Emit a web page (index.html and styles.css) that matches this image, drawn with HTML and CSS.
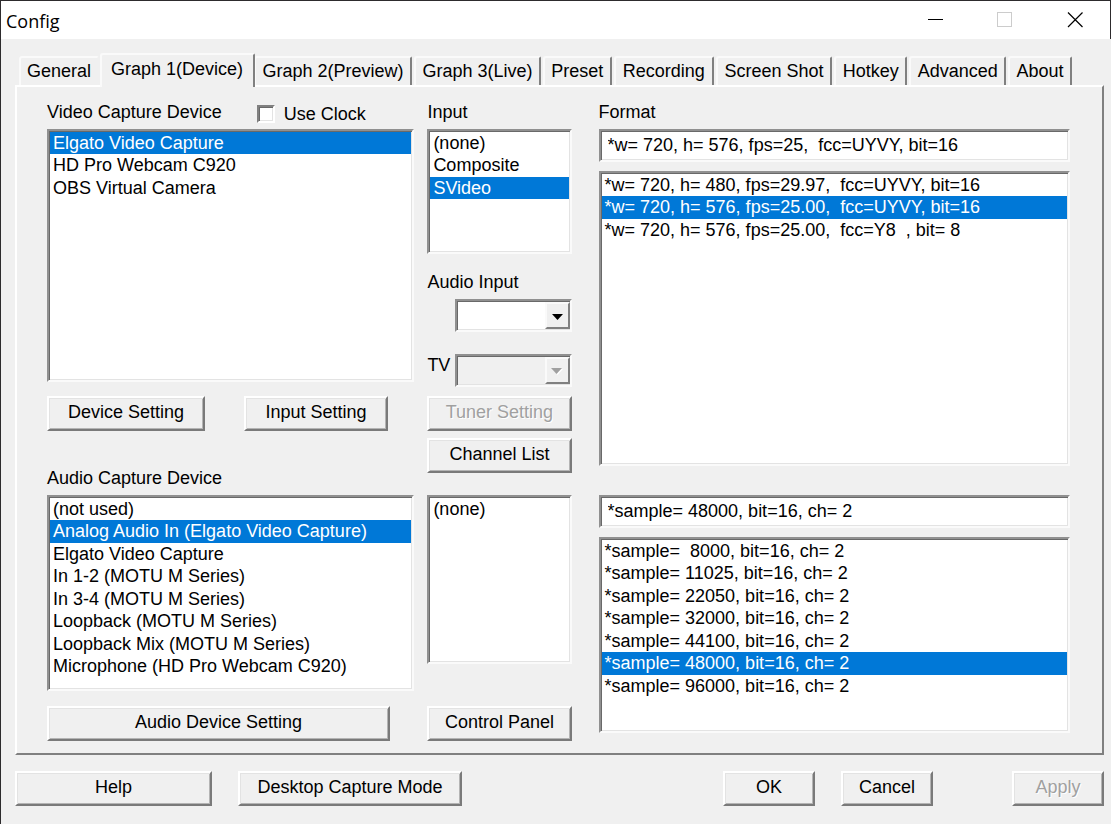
FILE: index.html
```html
<!DOCTYPE html>
<html lang="en">
<head>
<meta charset="utf-8">
<title>Config</title>
<link rel="stylesheet" href="styles.css">
</head>
<body>
<div class="window">
  <header class="titlebar">
    <h1 class="title">Config</h1>
    <div class="window-controls">
      <button class="window-button" type="button" aria-label="Minimize">
        <svg width="16" height="16" viewBox="0 0 16 16" shape-rendering="crispEdges"><path d="M1 7.500H16" stroke="#000"/></svg>
      </button>
      <button class="window-button" type="button" aria-label="Maximize" disabled>
        <svg width="16" height="16" viewBox="0 0 16 16" shape-rendering="crispEdges"><rect x="0.5" y="0.5" width="14" height="14" fill="none" stroke="#ccc"/></svg>
      </button>
      <button class="window-button" type="button" aria-label="Close">
        <svg width="16" height="16" viewBox="0 0 16 16"><path d="M1 0.500L15.500 15M15.500 0.500L1 15" stroke="#000" stroke-width="1.200"/></svg>
      </button>
    </div>
  </header>

  <main class="content">
    <div class="tabs" role="tablist">
      <button class="tab tab-first" type="button" role="tab">General</button>
      <button class="tab tab-active" type="button" role="tab" aria-selected="true">Graph 1(Device)</button>
      <button class="tab" type="button" role="tab">Graph 2(Preview)</button>
      <button class="tab" type="button" role="tab">Graph 3(Live)</button>
      <button class="tab" type="button" role="tab">Preset</button>
      <button class="tab tab-wide" type="button" role="tab">Recording</button>
      <button class="tab tab-wide" type="button" role="tab">Screen Shot</button>
      <button class="tab" type="button" role="tab">Hotkey</button>
      <button class="tab" type="button" role="tab">Advanced</button>
      <button class="tab" type="button" role="tab">About</button>
    </div>

    <section class="panel" role="tabpanel">
      <div class="column column-devices">
        <div class="label-row">
          <label class="label" for="video-device">Video Capture Device</label>
          <label class="check"><input class="checkbox" type="checkbox">Use Clock</label>
        </div>
        <select class="listbox video-devices" id="video-device" size="3">
          <option selected>Elgato Video Capture</option>
          <option>HD Pro Webcam C920</option>
          <option>OBS Virtual Camera</option>
        </select>
        <div class="button-row">
          <button class="button device-setting" type="button">Device Setting</button>
          <button class="button input-setting" type="button">Input Setting</button>
        </div>
        <label class="label audio-label" for="audio-device">Audio Capture Device</label>
        <select class="listbox audio-devices" id="audio-device" size="8">
          <option>(not used)</option>
          <option selected>Analog Audio In (Elgato Video Capture)</option>
          <option>Elgato Video Capture</option>
          <option>In 1-2 (MOTU M Series)</option>
          <option>In 3-4 (MOTU M Series)</option>
          <option>Loopback (MOTU M Series)</option>
          <option>Loopback Mix (MOTU M Series)</option>
          <option>Microphone (HD Pro Webcam C920)</option>
        </select>
        <button class="button audio-setting" type="button">Audio Device Setting</button>
      </div>

      <div class="column column-inputs">
        <label class="label" for="video-input">Input</label>
        <select class="listbox video-inputs" id="video-input" size="3">
          <option>(none)</option>
          <option>Composite</option>
          <option selected>SVideo</option>
        </select>
        <label class="label audio-input-label" for="audio-input">Audio Input</label>
        <div class="combo-row combo-row-end">
          <div class="combo">
            <select class="combo-field" id="audio-input"><option></option></select>
            <span class="combo-arrow"><svg width="11" height="6" viewBox="0 0 11 6"><path d="M0 0H11L5.500 6Z" fill="#000"/></svg></span>
          </div>
        </div>
        <div class="combo-row tv-row">
          <label class="tv-label" for="tv">TV</label>
          <div class="combo">
            <select class="combo-field" id="tv" disabled><option></option></select>
            <span class="combo-arrow"><svg width="12" height="7" viewBox="0 0 12 7"><path d="M1 1H12L6.500 7Z" fill="#fff"/><path d="M0 0H11L5.500 6Z" fill="#a0a0a0"/></svg></span>
          </div>
        </div>
        <button class="button" type="button" disabled>Tuner Setting</button>
        <button class="button channel-list" type="button">Channel List</button>
        <select class="listbox audio-inputs" aria-label="Audio device input" size="2">
          <option>(none)</option>
        </select>
        <button class="button control-panel" type="button">Control Panel</button>
      </div>

      <div class="column column-formats">
        <label class="label" for="video-format">Format</label>
        <input class="textbox" id="video-format" type="text" value="*w= 720, h= 576, fps=25,&nbsp; fcc=UYVY, bit=16">
        <select class="listbox video-formats" aria-label="Video formats" size="3">
          <option>*w= 720, h= 480, fps=29.97,&nbsp; fcc=UYVY, bit=16</option>
          <option selected>*w= 720, h= 576, fps=25.00,&nbsp; fcc=UYVY, bit=16</option>
          <option>*w= 720, h= 576, fps=25.00,&nbsp; fcc=Y8&nbsp; , bit= 8</option>
        </select>
        <input class="textbox audio-format" type="text" aria-label="Audio format" value="*sample= 48000, bit=16, ch= 2">
        <select class="listbox audio-formats" aria-label="Audio formats" size="7">
          <option>*sample=&nbsp; 8000, bit=16, ch= 2</option>
          <option>*sample= 11025, bit=16, ch= 2</option>
          <option>*sample= 22050, bit=16, ch= 2</option>
          <option>*sample= 32000, bit=16, ch= 2</option>
          <option>*sample= 44100, bit=16, ch= 2</option>
          <option selected>*sample= 48000, bit=16, ch= 2</option>
          <option>*sample= 96000, bit=16, ch= 2</option>
        </select>
      </div>
    </section>

    <footer class="footer">
      <button class="button help" type="button">Help</button>
      <button class="button desktop-mode" type="button">Desktop Capture Mode</button>
      <div class="dialog-buttons">
        <button class="button dialog-button" type="button">OK</button>
        <button class="button dialog-button" type="button">Cancel</button>
        <button class="button dialog-button apply" type="button" disabled>Apply</button>
      </div>
    </footer>
  </main>
</div>
</body>
</html>
```
FILE: styles.css
```css
* {
  box-sizing: border-box;
}

body {
  margin: 0;
  background: #f0f0f0;
  color: #000;
  font: 18px/22px "Liberation Sans", Arial, sans-serif;
}

button,
input,
select {
  margin: 0;
  color: inherit;
  font: inherit;
}

.window {
  min-height: 100vh;
  border-top: 1px solid #2d2b2d;
  border-left: 1px solid #2d2b2d;
}

/* Title bar */
.titlebar {
  display: flex;
  justify-content: space-between;
  height: 38px;
  padding-left: 5px;
  border-right: 1px solid #2d2b2d;
  background: #fff;
}

.title {
  margin: 0;
  font: 18px/40px "Open Sans", "Noto Sans", sans-serif;
}

.window-controls {
  display: flex;
}

.window-button {
  display: flex;
  align-items: center;
  justify-content: center;
  width: 70px;
  padding: 0;
  border: 0;
  background: none;
}

.content {
  padding: 14px 7px 16px 14px;
}

/* Tabs */
.tabs {
  display: flex;
  align-items: flex-end;
  gap: 2px;
  padding: 0 32px 0 4px;
}

.tab {
  flex: 1 0 auto;
  height: 29px;
  padding: 0 6px;
  border: 2px solid;
  border-color: #fafafa #808080 transparent #fafafa;
  border-bottom: 0;
  border-radius: 3px 2px 0 0;
  background: #f0f0f0;
  line-height: 27px;
  white-space: nowrap;
}

.tab-wide {
  flex-grow: 2;
}

.tab-first {
  flex-grow: 0;
  border-right-color: transparent;
}

.tab-active {
  position: relative;
  z-index: 1;
  flex-grow: 0;
  height: 34px;
  margin: 0 -3px -2px -1px;
  padding: 0 10px 4px 9px;
}

/* Tab page */
.panel {
  display: flex;
  padding: 14px 32px 12px 30px;
  border: 2px solid;
  border-color: #fff #808080 #808080 #fff;
}

.column {
  display: flex;
  flex-direction: column;
  min-width: 0;
}

.column-devices {
  flex: 367 1 0;
  margin-right: 13px;
}

.column-inputs {
  flex: 144 1 0;
  margin-right: 27px;
}

.column-formats {
  flex: 471 1 0;
}

.label-row {
  display: flex;
}

.label {
  height: 22px;
  margin-bottom: 6px;
}

.check {
  display: flex;
  align-items: center;
  gap: 9px;
  height: 26px;
  margin-left: 35px;
}

.checkbox {
  width: 18px;
  height: 18px;
  appearance: none;
  border: 2px solid;
  border-color: #808080 #fff #fff #808080;
  background: #fff;
  box-shadow: inset 1px 1px #696969, inset -1px -1px #e3e3e3;
}

/* Sunken fields */
.listbox,
.textbox,
.combo-field {
  width: 100%;
  appearance: none;
  border: 2px solid;
  border-color: #909090 #fafafa #fafafa #909090;
  border-radius: 0;
  outline: 0;
  background: #fff;
  box-shadow: inset 1px 1px #696969, inset -1px -1px #e3e3e3;
}

.listbox {
  padding: 1px;
  overflow: hidden;
}

.listbox option {
  min-height: 0;
  padding: 1px 3px 0;
}

.listbox option:nth-child(even) {
  padding-bottom: 1px;
}

.listbox option:checked {
  background: linear-gradient(#0078d7, #0078d7);
  -webkit-text-fill-color: #fff;
}

.textbox {
  height: 33px;
  padding: 0 7px;
}

.video-devices {
  height: 253px;
}

.audio-devices,
.audio-formats {
  height: 196px;
}

.video-inputs {
  height: 125px;
}

.audio-inputs {
  height: 169px;
  margin-top: 22px;
}

.video-formats {
  height: 295px;
  margin-top: 9px;
}

.audio-format {
  margin-top: 29px;
}

.audio-formats {
  margin-top: 9px;
}

/* Drop-downs */
.combo-row {
  display: flex;
  justify-content: space-between;
}

.combo-row-end {
  justify-content: flex-end;
}

.tv-row {
  margin: 22px 0 9px;
}

.combo {
  position: relative;
  width: 117px;
}

.combo-field {
  display: block;
  height: 33px;
}

.combo-field:disabled {
  background: #f0f0f0;
  opacity: 1;
}

.combo-arrow {
  position: absolute;
  top: 3px;
  right: 2px;
  bottom: 3px;
  display: flex;
  align-items: center;
  justify-content: center;
  width: 25px;
  padding-top: 2px;
  border: 2px solid;
  border-color: #fafafa #808080 #808080 #fafafa;
  background: #f0f0f0;
  pointer-events: none;
}

.audio-input-label {
  margin-top: 17px;
}

/* Push buttons */
.button {
  height: 35px;
  padding: 0 0 3px;
  border: 2px solid;
  border-color: #fff #7a7a7a #7a7a7a #fff;
  border-radius: 0;
  background: #f0f0f0;
  box-shadow: inset 1px 1px #e3e3e3, inset -1px -1px #b4b4b4;
  white-space: nowrap;
}

.button:disabled {
  color: #a0a0a0;
  text-shadow: 1px 1px #fff;
}

.button-row {
  display: flex;
  gap: 39px;
  margin-top: 14px;
}

.device-setting {
  width: 158px;
}

.input-setting {
  width: 144px;
}

.audio-label {
  margin-top: 36px;
}

.audio-setting {
  width: 343px;
  margin-top: 15px;
}

.channel-list {
  margin-top: 7px;
}

.control-panel {
  margin-top: 42px;
}

/* Dialog footer */
.footer {
  display: flex;
  gap: 26px;
  padding-top: 16px;
}

.help {
  width: 197px;
}

.desktop-mode {
  width: 224px;
}

.dialog-buttons {
  display: flex;
  gap: 26px;
  margin-left: auto;
}

.dialog-button {
  width: 92px;
}

.apply {
  margin-left: 53px;
}
```
